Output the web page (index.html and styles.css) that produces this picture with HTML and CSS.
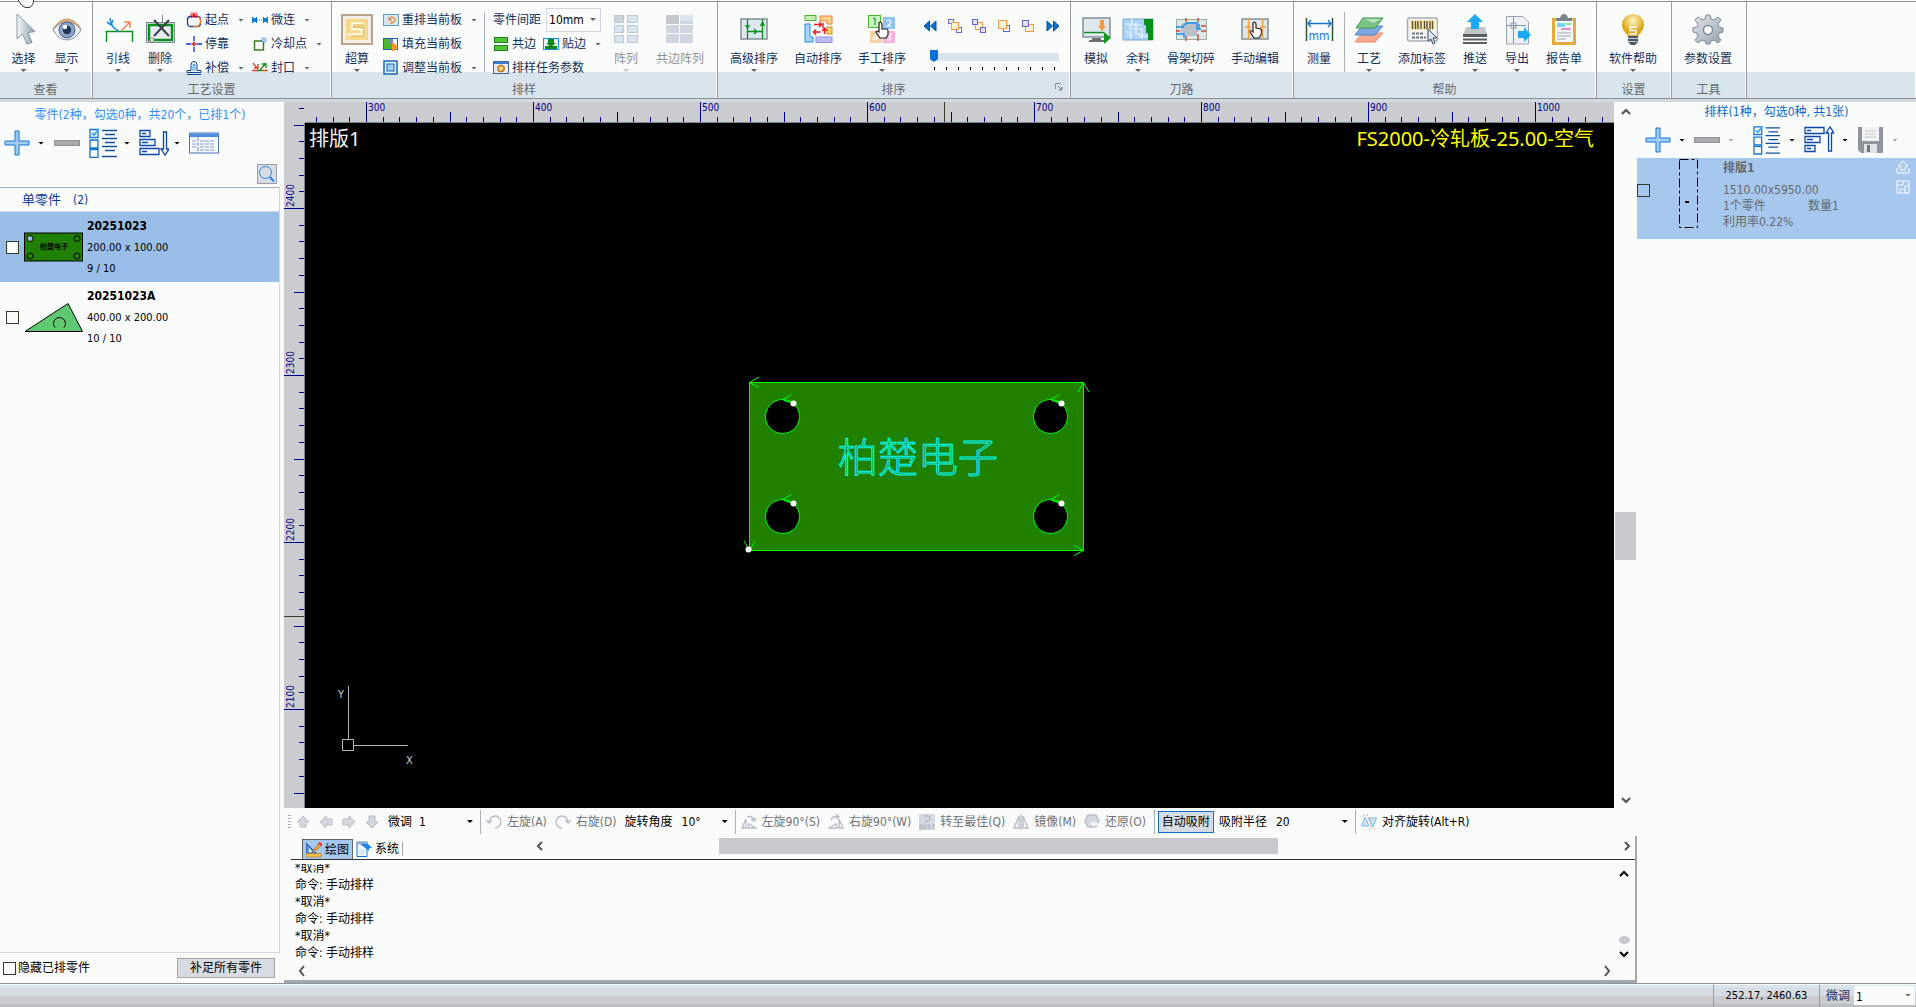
FILE: index.html
```html
<!DOCTYPE html>
<html lang="zh-CN">
<head>
<meta charset="utf-8">
<title>排版1</title>
<link rel="stylesheet" href="styles.css">
</head>
<body>
<div class="app">
<svg class="pointer" width="18" height="9" viewBox="0 0 18 9"><path d="M0.500 -1 Q3 3 5 5.500 Q8 8.500 12 7.500 Q17 6 16.500 -1Z" fill="#fff" stroke="#333"/></svg>
<header class="ribbon">
  <section class="group g-view">
    <div class="tools">
      <button class="tool w43"><svg viewBox="0 0 32 32"><defs><linearGradient id="cur" x1="0" x2="1"><stop offset="0" stop-color="#f4f7fa"/><stop offset="1" stop-color="#8f9db0"/></linearGradient></defs><path d="M9 0V25L14.500 20L19 30L24 28.500L20 18.500L27 17.500Z" fill="url(#cur)" stroke="#8893a3"/></svg><span>选择</span><i class="caret"></i></button>
      <button class="tool w43"><svg viewBox="0 0 32 32"><path d="M2 15Q8 5 16 5T30 15Q24 9 16 9T2 15Z" fill="#e3b27a" stroke="#a86f35" stroke-width=".6"/><path d="M2 16Q8 8 16 8T30 16Q24 26 16 26T2 16Z" fill="#eef2f7" stroke="#8a93a0"/><circle cx="16" cy="16" r="8" fill="#8ba3c4" stroke="#4b6284"/><circle cx="16" cy="16" r="4.200" fill="#1e3557"/><circle cx="14" cy="13" r="2.200" fill="#fff"/></svg><span>显示</span><i class="caret"></i></button>
    </div>
    <h2>查看</h2>
  </section>
  <section class="group g-craft">
    <div class="tools">
      <button class="tool w42"><svg viewBox="0 0 32 32" fill="none"><path d="M4.500 28V17.500H30.500V28" stroke="#0a8f1c" stroke-width="1.400"/><path d="M8 4Q9 14 17 17M5 8L9 11L11 6" stroke="#1c8fe6" stroke-width="1.600"/><path d="M19 17L27 9M22 8L28 8V14" stroke="#f0855a" stroke-width="1.500"/></svg><span>引线</span><i class="caret"></i></button>
      <button class="tool w42"><svg viewBox="0 0 32 32" fill="none"><rect x="2.500" y="8.500" width="28" height="20" fill="#e7edf0" stroke="#7d8896"/><rect x="5" y="11" width="23" height="15" stroke="#0a8f1c" stroke-width="2.500"/><path d="M18.500 1V9" stroke="#7d8896"/><path d="M10 6L25 22M25 6L10 22" stroke="#3c3f44" stroke-width="2"/><circle cx="8" cy="26" r="2" fill="#fff" stroke="#888"/></svg><span>删除</span><i class="caret"></i></button>
      <div class="stack">
        <button class="mini"><svg viewBox="0 0 16 16" fill="none"><rect x="1.500" y="4.500" width="13" height="10" rx="3" stroke="#223a96" stroke-width="1.300"/><path d="M7 14.500H12L14.500 11V7L12 4.500" stroke="#e0883a" stroke-width="1.300"/><path d="M5 .5L11 6M11 .5L5 6M4 3H12M8 0V6" stroke="#e11"/></svg><span>起点</span><i class="caret"></i></button>
        <button class="mini"><svg viewBox="0 0 16 16"><path d="M0 8H5M11 8H16M8 0V5M8 11V16" stroke="#1b2fe0" stroke-width="1.300"/><path d="M5.500 8H10.500M8 5.500V10.500" stroke="#e11" stroke-width="1.300"/></svg><span>停靠</span></button>
        <button class="mini"><svg viewBox="0 0 16 16" fill="none" stroke="#12459a"><path d="M1 14.500H15M1 10.500H5V5Q5 1.500 8 1.500T11 5V10.500H15V12.500H1Z"/><path d="M7 11V5Q8 3 9 5V11" stroke="#1c8fe6"/></svg><span>补偿</span><i class="caret"></i></button>
      </div>
      <div class="stack">
        <button class="mini"><svg viewBox="0 0 16 16"><path d="M0 5L4 8L0 11M5 5L2 8L5 11M16 5L12 8L16 11M11 5L14 8L11 11" fill="#0b75d8" stroke="#0b75d8"/><path d="M5 8H12" stroke="#0b75d8" stroke-dasharray="1 1"/></svg><span>微连</span><i class="caret"></i></button>
        <button class="mini"><svg viewBox="0 0 16 16" fill="none"><rect x="2.500" y="5" width="9" height="9" stroke="#35751b" stroke-width="1.400"/><circle cx="12" cy="4" r="2" fill="#cfe4fa" stroke="#4a9bea"/></svg><span>冷却点</span><i class="caret"></i></button>
        <button class="mini"><svg viewBox="0 0 16 16" fill="none"><path d="M0 10.500H6M10 10.500H16" stroke="#d8432b" stroke-width="1.500"/><path d="M5 10.500H10" stroke="#0a8f1c" stroke-width="1.500"/><path d="M1 3L6 9M2 8H6V4" stroke="#d8432b" stroke-width="1.300"/><path d="M8 10L14 3M10 4H14V8" stroke="#0a8f1c" stroke-width="1.300"/></svg><span>封口</span><i class="caret"></i></button>
      </div>
    </div>
    <h2>工艺设置</h2>
  </section>
  <section class="group g-nest">
    <div class="tools">
      <button class="tool w42"><svg viewBox="0 0 32 32"><rect x="1" y="1" width="30" height="29" fill="#f2eee6" stroke="#b9a48a" stroke-width="2"/><rect x="5" y="5" width="22" height="21" fill="#f6d988"/><path d="M23 9.500H11V15H21V20.500H6" fill="none" stroke="#fff8de" stroke-width="2.500"/><path d="M23 11H12.500V13.500H22.500V22H10" fill="none" stroke="#d8a947" stroke-width=".8"/></svg><span>超算</span><i class="caret"></i></button>
      <div class="stack w98">
        <button class="mini"><svg viewBox="0 0 16 16" fill="none"><rect x=".5" y="2.500" width="15" height="11" fill="#d8e8f2" stroke="#6b9ab8"/><path d="M6 5V8H9M6.500 7Q8 4 11 6T9 11H7" stroke="#f0883a" stroke-width="1.300"/></svg><span>重排当前板</span><i class="caret"></i></button>
        <button class="mini"><svg viewBox="0 0 16 16"><rect x=".5" y="2.500" width="14" height="11" fill="#fff" stroke="#1667b7"/><path d="M1 3H6V13H1Z" fill="#4cb82c"/><path d="M6 3H10V8H6Z" fill="#8a7bea"/><path d="M6 8H10V13H6Z" fill="#4cb82c"/><path d="M9 7H11L15 11L11 15H9Z" fill="#f49422"/></svg><span>填充当前板</span></button>
        <button class="mini"><svg viewBox="0 0 16 16"><rect x="1" y="1" width="13" height="13" fill="#e6f0fa" stroke="#1667b7" stroke-width="1.500"/><rect x="4" y="4" width="7" height="7" fill="#a8cdf2" stroke="#1667b7"/></svg><span>调整当前板</span><i class="caret"></i></button>
      </div>
      <i class="divider"></i>
      <div class="stack w112">
        <div class="line"><label for="gap">零件间距</label><div class="combo boxed"><select id="gap"><option>10mm</option></select></div></div>
        <div class="line">
          <button class="mini"><svg viewBox="0 0 16 16" fill="#56c43a" stroke="#12851c"><rect x="1.500" y="1.500" width="13" height="5"/><rect x="1.500" y="9.500" width="13" height="5"/></svg><span>共边</span></button>
          <button class="mini second"><svg viewBox="0 0 16 16"><rect x=".5" y="2.500" width="15" height="11" fill="#eaf6ff" stroke="#1c8fe6"/><path d="M5 3H11V7H13L8 11L3 7H5ZM2 10H14V13H2Z" fill="#0a8a14"/></svg><span>贴边</span><i class="caret"></i></button>
        </div>
        <button class="mini"><svg viewBox="0 0 16 16"><rect x=".5" y="1.500" width="15" height="12" fill="#e9edf2" stroke="#3c6697"/><path d="M1 3H15" stroke="#3b7dd0" stroke-width="2"/><circle cx="8" cy="8.500" r="3.500" fill="#f0a63a" stroke="#b26c12"/><circle cx="8" cy="8.500" r="1.200" fill="#fff"/></svg><span>排样任务参数</span></button>
      </div>
      <button class="tool w42" disabled><svg viewBox="0 0 32 32" fill="#d8e4ee" stroke="#bfc9d6"><rect x="4.500" y="1.500" width="9" height="7" fill="#cfd3da"/><rect x="17.500" y="1.500" width="10" height="7"/><rect x="4.500" y="11.500" width="9" height="7"/><rect x="17.500" y="11.500" width="10" height="7"/><rect x="4.500" y="21.500" width="9" height="7"/><rect x="17.500" y="21.500" width="10" height="7"/></svg><span>阵列</span><i class="caret"></i></button>
      <button class="tool w66" disabled><svg viewBox="0 0 32 32" fill="#cfd5de"><rect x="2" y="1" width="13" height="9" fill="#c6c8cc"/><rect x="16" y="1" width="13" height="6" fill="#d9e6ee"/><rect x="16" y="7" width="13" height="3"/><rect x="2" y="11" width="13" height="8"/><rect x="16" y="11" width="13" height="8"/><rect x="2" y="20" width="13" height="9"/><rect x="16" y="20" width="13" height="9"/></svg><span>共边阵列</span></button>
    </div>
    <h2>排样</h2>
  </section>
  <section class="group g-order">
    <div class="tools">
      <button class="tool w64"><svg viewBox="0 0 32 32" fill="none"><rect x="3" y="5" width="26" height="20" fill="#dde7f0" stroke="#7d8896" stroke-width="1.400"/><path d="M9.500 5V25M24.500 25V5M9.500 17.500H24.500M7.500 11L9.500 14L11.500 11M22.500 12L24.500 8L26.500 12M16 15L19 17.500L16 20" stroke="#0a8f1c" stroke-width="1.300"/></svg><span>高级排序</span><i class="caret"></i></button>
      <button class="tool w64"><svg viewBox="0 0 32 32"><rect x="3" y="1.500" width="11" height="5" fill="#c5efb5" stroke="#4cb82c"/><path d="M18 2H30V10H25V7H18Z" fill="#ffd28a" stroke="#f08430"/><path d="M3 10H8V23H11V28H3Z" fill="#a9d4f8" stroke="#1c8fe6"/><rect x="25" y="13" width="5" height="7" fill="#f6d15c" stroke="#c8952a"/><rect x="14" y="23" width="16" height="5.500" fill="#bcbcf8" stroke="#9090e0"/><path d="M12 10.500H19M17 8L19.500 10.500L17 13M21 9V14M18.500 18H12M14 15.500L11.500 18L14 21M22.500 20V15M20 17L22.500 14L25 17" fill="none" stroke="#f01818" stroke-width="1.400"/></svg><span>自动排序</span></button>
      <button class="tool w64"><svg viewBox="0 0 32 32"><rect x="2.500" y="1.500" width="12" height="12" fill="#c5f5c0" stroke="#4cb82c"/><rect x="17" y="3" width="12" height="12" fill="#8fc3f5"/><rect x="4" y="17" width="12" height="12" fill="#fad0a0"/><rect x="17" y="17" width="12" height="12" fill="#f9aede"/><path d="M7 5L9 4V11" fill="none" stroke="#0a8f1c"/><path d="M21 7Q23 5 24.500 7T21 12H25M21 20H25L23 23Q26 24 24 26H21M9 20L7 25H12M10.500 22V27" fill="none" stroke="#fff" stroke-width="1.200"/><path d="M13 9Q15 7 16 10V15H21Q22 15 22 17V21L20 24H14L10 18Q10 16 13 18Z" fill="#fff" stroke="#222" stroke-width="1.200"/></svg><span>手工排序</span><i class="caret"></i></button>
      <div class="sequence">
        <div class="seq-row">
          <button aria-label="最前"><svg viewBox="0 0 14 14" fill="#0b6fd6" stroke="#0a4f9e"><path d="M6.500 2V12L1 7ZM13 2V12L7.500 7Z"/></svg></button>
          <button aria-label="后移"><svg viewBox="0 0 14 14" fill="#fff"><rect x=".5" y=".5" width="5" height="4" stroke="#6a64d0"/><rect x="8.500" y="8.500" width="5" height="5" stroke="#6a64d0"/><rect x="3.500" y="3.500" width="7" height="7" fill="#fff3d8" stroke="#f79a3c"/></svg></button>
          <button aria-label="上移"><svg viewBox="0 0 14 14" fill="#fff"><rect x="3.500" y="3.500" width="7" height="7" fill="#fff3d8" stroke="#f79a3c"/><rect x=".5" y=".5" width="5" height="5" fill="#dfe3f8" stroke="#6a64d0"/><rect x="8.500" y="8.500" width="5" height="5" fill="#dfe3f8" stroke="#6a64d0"/></svg></button>
          <button aria-label="置前"><svg viewBox="0 0 14 14" fill="#fff"><rect x="6.500" y="6.500" width="6" height="6" stroke="#6a64d0"/><rect x="1.500" y="1.500" width="8" height="8" fill="#fff3d8" stroke="#f79a3c"/></svg></button>
          <button aria-label="置后"><svg viewBox="0 0 14 14" fill="#fff"><rect x="4.500" y="5.500" width="8" height="7" fill="#fff3d8" stroke="#f79a3c"/><rect x="1.500" y="1.500" width="6" height="6" fill="#dfe3f8" stroke="#6a64d0"/></svg></button>
          <button aria-label="最后"><svg viewBox="0 0 14 14" fill="#0b6fd6" stroke="#0a4f9e"><path d="M1 2V12L6.500 7ZM7.500 2V12L13 7Z"/></svg></button>
        </div>
        <input type="range" min="0" max="10" value="0" aria-label="排序">
        <div class="ticks"><i></i><i></i><i></i><i></i><i></i><i></i><i></i><i></i><i></i><i></i><i></i></div>
      </div>
    </div>
    <h2>排序</h2>
    <svg class="launcher" viewBox="0 0 8 8" fill="none" stroke="#8b9199"><path d="M.5 6V.5H6M3 3L6 6"/><path d="M4 7H7V4Z" fill="#8b9199"/></svg>
  </section>
  <section class="group g-path">
    <div class="tools">
      <button class="tool w42"><svg viewBox="0 0 32 32"><rect x="3" y="4" width="27" height="19" fill="#dde7ec" stroke="#7d8896" stroke-width="1.400"/><path d="M12 24H21V26H24V28H9V26H12Z" fill="#6b7076"/><path d="M4 18.500H24" stroke="#0a8f1c" stroke-width="1.400"/><path d="M20 6H24V12H26L22 17L18 12H20Z" fill="#f79a3c"/><path d="M24 18L31 24L24 30Z" fill="#0e9a1e"/></svg><span>模拟</span></button>
      <button class="tool w42"><svg viewBox="0 0 32 32"><path d="M1 5H31V26H1Z" fill="#a9d4f8" stroke="#7da6c4"/><path d="M22 5H31V26H26V19H24V11H22Z" fill="#0a8f1c"/><path d="M3 10H8V15H14M10 5V11H19M14 8V20H20M3 18H9V25M14 15H20V25M5 21H9M16 22H26" fill="none" stroke="#eef8ff" stroke-width="1.200"/></svg><span>余料</span><i class="caret"></i></button>
      <button class="tool w64"><svg viewBox="0 0 32 32" fill="none"><rect x="1.500" y="5.500" width="30" height="20" fill="#dfe6e8" stroke="#9ab09a"/><path d="M6 10L12 8H24V18H22V22H9V19H6Z" fill="#b9c0ca"/><path d="M1 13H8Q9 10 12 9H22V15H26M1 20H9V24M24 10V15" stroke="#1c8fe6" stroke-width="1.400"/><path d="M11 4V8M23 4V8M11 22V27M23 20V27M26 12H31M26 17H31M1 17H5" stroke="#d8432b" stroke-width="1.400"/></svg><span>骨架切碎</span><i class="caret"></i></button>
      <button class="tool w64"><svg viewBox="0 0 32 32"><rect x="3" y="5" width="26" height="20" fill="#dfe7ec" stroke="#7d8896" stroke-width="1.400"/><path d="M9.500 5V25M23.500 5V25M6 13H12M21 13H27" stroke="#f79a3c" stroke-width="1.300"/><path d="M14 9Q16 7 17 10V14L22 15Q23 17 22 21L20 24H15L11 18Q11 15 14 18Z" fill="#fff" stroke="#222" stroke-width="1.200"/></svg><span>手动编辑</span></button>
    </div>
    <h2>刀路</h2>
  </section>
  <section class="group g-help">
    <div class="tools">
      <button class="tool w42"><svg viewBox="0 0 32 32"><path d="M3.500 4V27M29.500 4V27" stroke="#36503a" stroke-width="1.500"/><path d="M5 9.500H28M8 6L5 9.500L8 13M25 6L28 9.500L25 13" fill="none" stroke="#1474d4" stroke-width="1.300"/><text x="16" y="26" text-anchor="middle" class="mm">mm</text></svg><span>测量</span></button>
      <i class="divider d4"></i>
      <button class="tool w42"><svg viewBox="0 0 32 32"><path d="M9 19H30L22 28H2Z" fill="#f8a890" stroke="#f08a70"/><path d="M9 12H30L22 21H2Z" fill="#7ba8e0" stroke="#4a84cc"/><path d="M10 4H30L22 14H3Z" fill="#7cc486" stroke="#3c9a4a"/><path d="M12 5H28L20 9Z" fill="#b9e3bb"/></svg><span>工艺</span><i class="caret"></i></button>
      <button class="tool w64"><svg viewBox="0 0 32 32"><rect x="1.500" y="4" width="30" height="23" rx="2" fill="#f2f4f5" stroke="#a9b0b8" stroke-width="1.600"/><path d="M4 6H29V16H4Z" fill="#fbe7a8"/><path d="M6.500 7V15M9.500 7V15M12 7V15M15 7V15M18.500 7V15M21 7V15M24 7V15M26.500 7V15" stroke="#5a5038" stroke-width="1.400"/><path d="M6 19.500H18M6 23.500H20" stroke="#6b7280" stroke-width="2" stroke-dasharray="3 1"/><path d="M22 15V27L25 25L27 30L29 29L27 24H31Z" fill="#dfe4ec" stroke="#3f4c63"/></svg><span>添加标签</span><i class="caret"></i></button>
      <button class="tool w42"><svg viewBox="0 0 32 32"><path d="M7 13H26L28 21H4Z" fill="#c3c6c8"/><path d="M4 20H28V23H4ZM4 24.500H28V26.500H4ZM4 28H28V30H4Z" fill="#5a6060"/><path d="M16 0L24 8H20V15H12V8H8Z" fill="#18a8f4"/></svg><span>推送</span><i class="caret"></i></button>
      <button class="tool w42"><svg viewBox="0 0 32 32"><path d="M5.500 2.500H22L27.500 8V30H5.500Z" fill="#eef2f5" stroke="#9aa4b0"/><path d="M12.500 3V29M6 11.500H25M10 9H15V14H10Z" fill="none" stroke="#8b97a6"/><path d="M17 17H23V13L30 21L23 28V24H17Z" fill="#18a8f4"/></svg><span>导出</span><i class="caret"></i></button>
      <button class="tool w52"><svg viewBox="0 0 32 32"><rect x="4" y="4" width="24" height="27" fill="#e5a93c"/><rect x="7" y="6" width="18" height="22" fill="#f7f9fb"/><path d="M8 4H12Q13 0 16 0T20 4H24V7H8Z" fill="#7a8491"/><path d="M9 9H17V13H9Z" fill="#6fd6f0"/><path d="M18 9H23V11H18Z" fill="#8ee08a"/><path d="M13 14H23V16H13Z" fill="#e58ad8"/><path d="M9 19H23M9 22H23M9 25H18" stroke="#98a3b0"/></svg><span>报告单</span><i class="caret"></i></button>
    </div>
    <h2>帮助</h2>
  </section>
  <section class="group g-set">
    <div class="tools">
      <button class="tool w66"><svg viewBox="0 0 32 32"><defs><radialGradient id="bulb" cx=".5" cy=".3"><stop offset="0" stop-color="#fff6c8"/><stop offset="1" stop-color="#dca91c"/></radialGradient></defs><path d="M16 0Q27 1 27 11Q27 16 21 22H11Q5 16 5 11Q5 1 16 0Z" fill="url(#bulb)"/><path d="M20 13H13V16.500H19V20H12" fill="none" stroke="#fff" stroke-width="1.400"/><path d="M11 22H21V28L18 31H14L11 28Z" fill="#4d5a66"/><path d="M11 24.500H21M11 27.500H20" stroke="#c3ccd3"/></svg><span>软件帮助</span><i class="caret"></i></button>
    </div>
    <h2>设置</h2>
  </section>
  <section class="group g-set">
    <div class="tools">
      <button class="tool w66"><svg viewBox="0 0 32 32"><defs><linearGradient id="gear" y2="1"><stop offset="0" stop-color="#e3e7ec"/><stop offset="1" stop-color="#97a1ad"/></linearGradient></defs><path d="M14 1H18L19 5L22 6L26 3L29 6L26 10L27 13L31 14V18L27 19L26 22L29 26L26 29L22 26L19 27L18 30H14L13 27L10 26L6 29L3 26L6 22L5 19L1 18V14L5 13L6 10L3 6L6 3L10 6L13 5Z" fill="url(#gear)" stroke="#7f8b99"/><circle cx="16" cy="16" r="4.500" fill="#fbfdfd" stroke="#7f8b99" stroke-width="1.500"/></svg><span>参数设置</span></button>
    </div>
    <h2>工具</h2>
  </section>
  <section class="group rest"><div class="tools"></div><h2></h2></section>
</header>

<main class="work">
  <aside class="parts">
    <h1>零件(2种，勾选0种，共20个，已排1个)</h1>
    <div class="bar">
      <button aria-label="添加零件"><svg width="26" height="30" viewBox="0 0 26 30"><path d="M11 3H15V13H25V17H15V27H11V17H1V13H11Z" fill="#9fcdf5" stroke="#1474d4"/></svg></button><i class="caret dark a1"></i>
      <button aria-label="删除零件"><svg width="26" height="30" viewBox="0 0 26 30"><rect x=".5" y="12.500" width="25" height="5" fill="#a9abad" stroke="#8f9193"/></svg></button>
      <button class="s9" aria-label="勾选"><svg width="30" height="30" viewBox="0 0 30 30" fill="none"><path d="M1 1.500H9V9.500H1ZM1 12H9V20H1ZM1 21.500H9V29.500H1Z" stroke="#1474d4" stroke-width="1.300"/><path d="M3 5L5 7L10 1" stroke="#4aa8f0" stroke-width="2"/><path d="M13 2.500H28M16 6.500H26M13 10.500H28M16 14.500H26M13 18.500H28M16 22.500H26M13 28.500H28" stroke="#14509a" stroke-width="1.300"/></svg></button><i class="caret dark a2"></i>
      <button class="s9" aria-label="排序"><svg width="30" height="30" viewBox="0 0 30 30" fill="none" stroke="#0d47a8" stroke-width="1.300"><path d="M1 2.500H11V8.500H1ZM1 11.500H16V17.500H1ZM1 20.500H20V26.500H1ZM3 5.500H7M3 14.500H9M3 23.500H8M24.500 4H27.500V21H30L26 27L22 21H24.500Z"/></svg></button><i class="caret dark a2"></i>
      <button class="s9" aria-label="列表"><svg width="30" height="30" viewBox="0 0 30 30"><rect x=".5" y="5" width="29" height="20" fill="#f6f9fd" stroke="#4a74b4"/><path d="M1 5.500H29V9H1Z" fill="#4f8de0"/><path d="M9 9V25M3 13H7M3 16H7M3 19H7M11 13H26M11 16H26M11 19H26M11 22H26" stroke="#7f9cc8" stroke-width="1.200" stroke-dasharray="4 1"/></svg></button>
    </div>
    <div class="find"><button aria-label="搜索"><svg width="18" height="18" viewBox="0 0 18 18" fill="none" stroke="#2f86dc"><circle cx="7.500" cy="7.500" r="6"/><path d="M12 12L16 16.500" stroke-width="2"/></svg></button></div>
    <div class="list">
      <h3>单零件<span>(2)</span></h3>
      <label class="part chosen"><input type="checkbox"><svg width="60" height="30" viewBox="0 0 60 30"><rect x=".5" y="1" width="58" height="28" fill="#208000" stroke="#000"/><g fill="none" stroke="#000"><circle cx="6" cy="6.500" r="3" fill="#99bfe8"/><circle cx="53" cy="6.500" r="3"/><circle cx="6" cy="24" r="3"/><circle cx="53" cy="24" r="3"/></g><text x="30" y="17" text-anchor="middle" class="stamp">柏楚电子</text></svg><span><b>20251023</b><em>200.00 x 100.00</em><em>9 / 10</em></span></label>
      <label class="part"><input type="checkbox"><svg width="60" height="30" viewBox="0 0 60 30"><path d="M1 29.500L44 1.500L58.500 29.500Z" fill="#60c870" stroke="#000"/><path d="M31 25.500A6 6 0 1 1 40 25.500" fill="none" stroke="#000"/></svg><span><b>20251023A</b><em>400.00 x 200.00</em><em>10 / 10</em></span></label>
    </div>
    <div class="foot"><label><input type="checkbox">隐藏已排零件</label><button>补足所有零件</button></div>
  </aside>

  <div class="center">
    <div class="stage">
      <svg class="ruler-y">
        <defs><pattern id="ty" y="106" width="21" height="167" patternUnits="userSpaceOnUse"><path d="M0 .5H20M15 17.500H20M15 33.500H20M15 50.500H20M15 67.500H20M10 84.500H20M15 100.500H20M15 117.500H20M15 134.500H20M15 150.500H20" stroke="#000090"/></pattern></defs>
        <rect width="100%" height="100%" fill="url(#ty)"/>
        <path d="M0 514.500H20" stroke="#384028"/><path d="M20.500 21V2000" stroke="#7c8494"/>
        <g><text transform="translate(10 105) rotate(-90)">2400</text><text transform="translate(10 272) rotate(-90)">2300</text><text transform="translate(10 439) rotate(-90)">2200</text><text transform="translate(10 606) rotate(-90)">2100</text></g>
      </svg>
      <svg class="ruler-x">
        <defs><pattern id="tx" x="61" width="167" height="21" patternUnits="userSpaceOnUse"><path d="M.5 0V20M17.500 15V20M33.500 15V20M50.500 15V20M67.500 15V20M84.500 10V20M100.500 15V20M117.500 15V20M134.500 15V20M150.500 15V20" stroke="#000090"/></pattern></defs>
        <rect width="100%" height="100%" fill="url(#tx)"/>
        <path d="M639.500 0V20" stroke="#384028"/><path d="M0 20.500H4000" stroke="#7c8494"/>
        <g><text x="63" y="9">300</text><text x="230" y="9">400</text><text x="397" y="9">500</text><text x="564" y="9">600</text><text x="731" y="9">700</text><text x="898" y="9">800</text><text x="1065" y="9">900</text><text x="1232" y="9">1000</text></g>
      </svg>
      <div class="canvas">
        <svg class="drawing" fill="none">
          <defs><g id="hole"><circle r="17" fill="#000" stroke="#0f0"/><path d="M9 -22L0 -17L10 -13M1 -16L10 -14" stroke="#0f0"/><circle cx="11" cy="-13" r="3" fill="#fff"/></g></defs>
          <rect x="444.500" y="259.500" width="334" height="168" fill="#208000" stroke="#0f0"/>
          <path d="M454 254L444.500 259.500L454 264.500M773 269L778.500 259.500L784 269M769 422.500L778.500 427.500L769 432.500M439 418L444.500 427.500L450 418" stroke="#0f0"/>
          <circle cx="443.500" cy="426.500" r="3" fill="#fff"/>
          <use href="#hole" x="477.500" y="293.500"/><use href="#hole" x="745.500" y="293.500"/><use href="#hole" x="477.500" y="393.500"/><use href="#hole" x="745.500" y="393.500"/>
          <text x="613" y="349" text-anchor="middle" class="engrave">柏楚电子</text>
          <path d="M43.500 563V617M48 622.500H103M37.500 616.500H48.500V627.500H37.500Z" stroke="#b4b4b4"/>
          <text x="33" y="575" class="axis">Y</text><text x="101" y="641" class="axis">X</text>
        </svg>
        <div class="caption"><span>排版1</span><span class="sheet">FS2000-冷轧板-25.00-空气</span></div>
      </div>
      <div class="vscroll"><svg viewBox="0 0 10 8"><path d="M1 6L5 2L9 6"/></svg><i></i><svg viewBox="0 0 10 8"><path d="M1 2L5 6L9 2"/></svg></div>
    </div>

    <div class="cmdbar">
      <i class="grip"></i>
      <button class="arrow" disabled aria-label="上"><svg viewBox="0 0 14 14"><path d="M7 1L13 7H10V12H4V7H1Z"/></svg></button>
      <button class="arrow" disabled aria-label="左"><svg viewBox="0 0 14 14"><path d="M1 7L7 1V4H13V10H7V13Z"/></svg></button>
      <button class="arrow" disabled aria-label="右"><svg viewBox="0 0 14 14"><path d="M13 7L7 1V4H1V10H7V13Z"/></svg></button>
      <button class="arrow" disabled aria-label="下"><svg viewBox="0 0 14 14"><path d="M7 13L13 7H10V1H4V7H1Z"/></svg></button>
      <label for="nudge">微调</label><div class="combo c60"><select id="nudge"><option>1</option></select></div>
      <i class="divider"></i>
      <button disabled><svg viewBox="0 0 16 16" class="ln"><path d="M3 8A6 6 0 1 1 9 14M0 6L3 9L6 6"/></svg>左旋(A)</button>
      <button disabled><svg viewBox="0 0 16 16" class="ln"><path d="M13 8A6 6 0 1 0 7 14M10 6L13 9L16 6"/></svg>右旋(D)</button>
      <label for="angle">旋转角度</label><div class="combo c53"><select id="angle"><option>10°</option></select></div>
      <i class="divider"></i>
      <button disabled><svg viewBox="0 0 16 16" class="ln"><path d="M1 14L5 5V14ZM7 14L15 14L8 10ZM6 3Q11 1 13 6M10 5L13 7L15 4"/></svg>左旋90°(S)</button>
      <button disabled><svg viewBox="0 0 16 16" class="ln"><path d="M15 14L11 5V14ZM9 14L1 14L8 10ZM10 3Q5 1 3 6M8 0L11 3L8 5"/></svg>右旋90°(W)</button>
      <button disabled><svg viewBox="0 0 16 16" class="ln"><path d="M0 0H16V16H0Z" fill="#d5dae2" stroke="none"/><path d="M5 2H9Q12 3 11 6L6 8M1 11V15H3V11ZM5 11V15M5 11H7M5 13H7M5 15H7M9 15H11V13H9V11H11M13 11H16M14.500 11V15"/></svg>转至最佳(Q)</button>
      <button disabled><svg viewBox="0 0 16 16" class="ln"><path d="M1 14L6 2V14ZM15 14L10 2V14ZM8 0V16"/></svg>镜像(M)</button>
      <button disabled><svg viewBox="0 0 16 16" class="ln"><path d="M4 1H12L15 7L12 13H4L1 7Z" fill="#d5dae2"/><path d="M8 10H14Q15 14 11 14M10 8L8 10L10 12" stroke="#fff"/></svg>还原(O)</button>
      <i class="divider"></i>
      <button class="on">自动吸附</button>
      <label for="snap">吸附半径</label><div class="combo c80"><select id="snap"><option>20</option></select></div>
      <i class="divider"></i>
      <button class="live"><svg viewBox="0 0 16 16"><path d="M0.500 12L4 3L8 12ZM8 4H15.500L12 13Z" fill="#cfe2ee" stroke="#6cbcf0"/><path d="M3 0V2M6 0L11 15M8 15H9M13 15H14" stroke="#f0957a" stroke-dasharray="2 1"/></svg>对齐旋转(Alt+R)</button>
    </div>

    <div class="console">
      <div class="tabs">
        <button class="tab active"><svg viewBox="0 0 16 16"><path d="M0 1V12H11Z" fill="#5f8fe0" stroke="#1c3f8c"/><path d="M3 6V10H6Z" fill="#fff"/><path d="M0 11.500H15V15H0Z" fill="#f4c04a" stroke="#a8741a" stroke-width=".6"/><path d="M6 10L13 1L16 3L8 10Z" fill="#f4a52a" stroke="#804a10" stroke-width=".5"/><path d="M12 2L14 0L16 2L15 4Z" fill="#e03028"/></svg>绘图</button>
        <button class="tab"><svg viewBox="0 0 16 16"><path d="M1 2H11V15.500H1Z" fill="#f4f9ff" stroke="#1474d4"/><path d="M1 3V0M3 2V0M5 2V0M7 2V0M9 2V0M11 2V0" stroke="#8896a8"/><path d="M4 3H12L16 7H13V10L8 6Z" fill="#1a86ea"/><path d="M3 9H9M3 11H9M3 13H9" stroke="#b9d4ee"/></svg>系统</button>
        <i class="tab-end"></i>
        <div class="hscroll"><svg viewBox="0 0 8 10"><path d="M6 1L2 5L6 9"/></svg><i></i><svg viewBox="0 0 8 10"><path d="M2 1L6 5L2 9"/></svg></div>
      </div>
      <div class="log">
        <div class="lines"><p>*取消*</p><p>命令: 手动排样</p><p>*取消*</p><p>命令: 手动排样</p><p>*取消*</p><p>命令: 手动排样</p></div>
        <div class="logscroll"><svg viewBox="0 0 10 8"><path d="M1 6L5 2L9 6"/></svg><i></i><svg viewBox="0 0 10 8"><path d="M1 2L5 6L9 2"/></svg></div>
      </div>
      <div class="logfoot"><svg viewBox="0 0 8 12"><path d="M6 1L2 6L6 11"/></svg><svg viewBox="0 0 8 12"><path d="M2 1L6 6L2 11"/></svg></div>
    </div>
  </div>

  <aside class="sheets">
    <h1>排样(1种，勾选0种, 共1张)</h1>
    <div class="bar">
      <button aria-label="添加排样"><svg width="26" height="30" viewBox="0 0 26 30"><path d="M11 3H15V13H25V17H15V27H11V17H1V13H11Z" fill="#9fcdf5" stroke="#1474d4"/></svg></button><i class="caret dark"></i>
      <button aria-label="删除排样"><svg width="26" height="30" viewBox="0 0 26 30"><rect x=".5" y="12.500" width="25" height="5" fill="#a9abad" stroke="#8f9193"/></svg></button><i class="caret pale"></i>
      <button aria-label="勾选" class="s6"><svg width="28" height="30" viewBox="0 0 29 30" fill="none"><path d="M1 1.500H9V9.500H1ZM1 12H9V20H1ZM1 21.500H9V29.500H1Z" stroke="#1474d4" stroke-width="1.300"/><path d="M3 5L5 7L10 1" stroke="#4aa8f0" stroke-width="2"/><path d="M13 2.500H28M16 6.500H26M13 10.500H28M16 14.500H26M13 18.500H28M16 22.500H26M13 28.500H28" stroke="#14509a" stroke-width="1.300"/></svg></button><i class="caret dark"></i>
      <button aria-label="排序"><svg width="30" height="30" viewBox="0 0 30 30" fill="none" stroke="#0d47a8" stroke-width="1.300"><path d="M1 2.500H20V8.500H1ZM1 11.500H16V17.500H1ZM1 20.500H11V26.500H1ZM3 5.500H7M3 14.500H9M3 23.500H7M24.500 26H27.500V8H30L26 2L22 8H24.500Z"/></svg></button><i class="caret dark"></i>
      <button aria-label="保存"><svg width="27" height="30" viewBox="0 0 27 30"><path d="M1 2H26V28H4L1 25Z" fill="#8f959c"/><path d="M5 2H22V16H5Z" fill="#f2f4f4"/><path d="M8 6H19M8 9H19M8 12H19" stroke="#c4cacc"/><path d="M7 19H20V28H7Z" fill="#dfe5e8"/><path d="M10 20H13V27H10Z" fill="#6d7780"/></svg></button><i class="caret pale"></i>
    </div>
    <label class="sheet-card">
      <input type="checkbox">
      <svg class="preview" width="20" height="70" viewBox="0 0 20 70" fill="none" stroke="#000"><rect x=".5" y=".5" width="18" height="68" stroke-dasharray="9 3 3 3"/><path d="M6 43H10" stroke-width="2"/></svg>
      <span class="info"><b>排版1</b><em>1510.00x5950.00</em><em class="pair"><span>1个零件</span><span>数量1</span></em><em>利用率0.22%</em></span>
      <span class="marks"><svg viewBox="0 0 14 14"><path d="M1 8V13H13V8M4.500 10V6H2L7 1L12 6H9.500V10Z"/></svg><svg viewBox="0 0 14 14"><path d="M1 1H13V13H1ZM1 5H7V1M13 6H9V9H4V13M9 9V13"/></svg></span>
    </label>
  </aside>
</main>

<footer class="status">
  <span class="pos">252.17, 2460.63</span>
  <label for="step">微调</label>
  <div class="combo fill"><select id="step"><option>1</option></select></div>
</footer>
</div>
</body>
</html>
```

FILE: styles.css
```css
* { box-sizing: border-box; }
body {
  margin: 0;
  font: 12px/16px "DejaVu Sans Condensed", "Noto Sans", "Noto Sans CJK SC", sans-serif;
  color: #000;
  background: #fafcfc;
}
h1, h2, h3, p { margin: 0; font-size: 12px; font-weight: 400; }
em, i { font-style: normal; }
svg { display: block; flex: none; }
button, select, input { font: inherit; color: inherit; margin: 0; }
button { padding: 0; border: 0; background: none; white-space: nowrap; }
label { white-space: nowrap; }
input[type="checkbox"] {
  appearance: none;
  flex: none;
  width: 13px;
  height: 13px;
  border: 1px solid #333a2c;
  background: #fafcfc;
}
.app { position: relative; height: 100vh; min-height: 500px; display: flex; flex-direction: column; overflow: hidden; }
.pointer { position: absolute; left: 17px; top: 0; z-index: 2; }

.caret {
  flex: none;
  width: 6px;
  height: 3px;
  background: #606468;
  clip-path: polygon(0 0, 100% 0, 50% 100%);
}
.caret.dark { background: #000; }
.caret.pale { background: #a4a6a8; }
.divider { flex: none; width: 1px; align-self: stretch; background: #a8b0b6; }

/* Ribbon */
.ribbon {
  flex: none;
  display: flex;
  margin-top: 1px;
  border-top: 1px solid #909294;
  border-bottom: 1px solid #8c9094;
  color: #14305c;
}
.group { position: relative; flex: none; border-right: 1px solid #9a9ea2; }
.tools { display: flex; height: 70px; padding-left: 4px; }
.group h2 {
  height: 26px;
  margin-right: 1px;
  line-height: 36px;
  text-align: center;
  color: #66696c;
  background: #d9e5ed;
}
.g-view { width: 93px; }
.g-view .tools { padding-left: 2px; }
.g-craft { width: 239px; }
.g-nest { width: 386px; }
.g-order { width: 353px; }
.g-path { width: 223px; }
.g-help { width: 303px; }
.g-set { width: 75px; }
.g-set .tools { padding-left: 3px; }
.rest { flex: 1; border: 0; }

.tool { display: flex; flex-direction: column; align-items: center; padding-top: 12px; }
.tool svg { width: 32px; height: 32px; margin-bottom: 5px; }
.tool .caret { margin-top: 2px; }
.tool:disabled { color: #8e9296; }
.tool:disabled .caret { background: #c4c8cc; }
.mm { font-size: 12px; fill: #1474d4; }
.w42 { width: 42px; }
.w43 { width: 43px; }
.w52 { width: 52px; }
.w64 { width: 64px; }
.w66 { width: 66px; }
.stack { position: relative; z-index: 1; display: grid; grid-template-rows: repeat(3, 24px); padding-top: 6px; width: 66px; }
.tool + .stack { margin-left: 5px; }
.stack.w98 { width: 98px; }
.stack.w112 { width: 112px; margin-left: 8px; }
.mini { display: flex; align-items: center; gap: 3px; }
.mini svg { width: 16px; height: 16px; }
.mini .caret { margin-left: 6px; }
.mini.second { margin-left: 7px; }
.line { display: flex; align-items: center; }
.tools .divider { margin: 10px 0 0 3px; }
.tools .d4 { margin: 10px 3px 0 4px; }

.combo { position: relative; display: flex; }
.combo select { appearance: none; width: 100%; padding: 0 2px; border: 0; border-radius: 0; background: transparent; color: #000; }
.combo::after {
  content: "";
  position: absolute;
  right: 4px;
  top: 50%;
  width: 6px;
  height: 3px;
  margin-top: -2px;
  background: #000;
  clip-path: polygon(0 0, 100% 0, 50% 100%);
  pointer-events: none;
}
.combo.boxed { width: 55px; height: 24px; margin-left: 5px; border: 1px solid #cfd5e0; }
.combo.boxed::after { background: #606468; }

.sequence { width: 138px; margin-left: 9px; padding-top: 17px; }
.seq-row { display: flex; justify-content: space-between; padding-right: 1px; }
.seq-row svg { width: 14px; height: 14px; }
.sequence input {
  appearance: none;
  display: block;
  width: 129px;
  height: 12px;
  margin: 17px 0 0 7px;
  background: linear-gradient(#d9e5ed, #d9e5ed) 0 3px / 100% 8px no-repeat;
}
.sequence input::-webkit-slider-thumb {
  appearance: none;
  width: 8px;
  height: 12px;
  background: #0b6fd6;
  clip-path: polygon(0 0, 100% 0, 100% 75%, 50% 100%, 0 75%);
}
.ticks { display: flex; justify-content: space-between; width: 121px; margin: 5px 0 0 11px; }
.ticks i { width: 1px; height: 3px; background: #000; }
.launcher { position: absolute; right: 7px; bottom: 7px; width: 8px; height: 8px; }

/* Work area */
.work {
  flex: 1;
  min-height: 0;
  display: grid;
  grid-template-columns: 280px minmax(0, 1fr) 279px;
  border-top: 3px solid #d3d9e1;
  border-bottom: 1px solid #8e949c;
}
.bar { display: flex; align-items: center; height: 30px; }

.parts { display: flex; flex-direction: column; min-height: 0; }
.parts h1 { padding: 5px 0; text-align: center; color: #3090f8; }
.parts .bar { padding-left: 4px; }
.a1 { margin: 0 10px 0 8px; }
.a2 { margin-left: 5px; }
.parts .s9 { margin-left: 9px; }
.find { display: flex; justify-content: flex-end; padding: 6px 3px 3px; }
.find button { display: grid; place-items: center; width: 20px; height: 20px; border: 1px solid #9aa0a6; background: #d8dde5; }
.list { flex: 1; min-height: 0; border: solid #d3d9e3; border-width: 1px 1px 1px 0; border-top-color: #a0b0c0; }
.list h3 { height: 24px; padding-left: 22px; line-height: 23px; border-bottom: 1px solid #d3dfe8; color: #0c3c98; font-size: 13px; }
.list h3 span { margin-left: 12px; font-size: 12px; }
.part { display: flex; align-items: center; height: 70px; padding-left: 6px; }
.part.chosen { background: #99bfe8; }
.part svg { margin: 0 2px 0 5px; }
.part > span { display: flex; flex-direction: column; gap: 5px; padding: 1px 0 0 1px; }
.part b { font-size: 12px; }
.part em { font-size: 11px; }
.part b + em { margin-top: 1px; }
.stamp { font-size: 7px; font-weight: 700; }
.foot { display: flex; align-items: center; justify-content: space-between; height: 30px; padding: 0 5px 0 3px; }
.foot label { display: flex; align-items: center; gap: 2px; }
.foot button { width: 98px; height: 20px; border: 1px solid #a2a4a6; background: #d7dbe3; }

.center { display: flex; flex-direction: column; min-height: 0; margin-left: 4px; }
.stage {
  flex: 1;
  min-height: 0;
  display: grid;
  grid-template: 21px minmax(0, 1fr) / 21px minmax(0, 1fr) 23px;
}
.ruler-y { grid-area: 1 / 1 / 3 / 2; }
.ruler-x { grid-area: 1 / 2; }
.ruler-x, .ruler-y { width: 100%; height: 100%; overflow: hidden; background: #cbcccf; font-size: 10px; fill: #000090; }
.canvas { grid-area: 2 / 2; position: relative; overflow: hidden; background: #000; }
.drawing { width: 100%; height: 100%; }
.engrave { font: 300 40px "Noto Sans CJK SC", sans-serif; fill: #208000; stroke: #0ff; }
.axis { font-size: 11px; fill: #d0d0d0; }
.caption {
  position: absolute;
  inset: 4px 20px auto 4px;
  display: flex;
  justify-content: space-between;
  font: 20px/24px "Noto Sans", "Noto Sans CJK SC", sans-serif;
  color: #f4f4f4;
}
.sheet { color: #ff0; }
.vscroll { grid-area: 1 / 3 / 3 / 4; display: flex; flex-direction: column; align-items: center; padding: 6px 0 4px; }
.vscroll svg, .logscroll svg { width: 10px; height: 8px; fill: none; stroke: #505254; stroke-width: 2; }
.vscroll i { width: 21px; height: 48px; margin: 396px 0 auto; background: #c8c9cc; }

.cmdbar { flex: none; display: flex; align-items: center; height: 28px; padding: 2px 0 2px 4px; overflow: hidden; }
.cmdbar > * { flex: none; }
.grip { width: 3px; height: 15px; margin-right: 5px; background: repeating-linear-gradient(#a8aaac 0 1px, transparent 1px 3px); }
.cmdbar button { display: flex; align-items: center; gap: 5px; height: 22px; margin-right: 8px; }
.cmdbar button svg { width: 16px; height: 16px; }
.cmdbar button:disabled { color: #707274; }
.cmdbar .arrow { margin-right: 9px; }
.cmdbar .arrow svg { width: 14px; height: 14px; fill: #d3d8e0; stroke: #b8bcc2; }
.ln { fill: none; stroke: #b8bec8; stroke-width: 1.4; }
.cmdbar .divider { margin-right: 5px; }
.c60 { width: 68px; padding-left: 6px; }
.c53 { width: 62px; padding-left: 8px; }
.c80 { width: 88px; padding-left: 8px; }
.cmdbar .combo::after { right: 7px; }
.cmdbar .combo select { padding: 0 1px; }
.cmdbar .on { justify-content: center; width: 56px; margin: 0 5px 0 -2px; border: 1px solid #0b6fd6; background: #d7dbe3; }

.console { flex: none; border: solid #a5a8a8; border-width: 0 2px 3px 0; }
.tabs { display: flex; align-items: flex-end; height: 24px; margin-left: 7px; padding-left: 11px; border-bottom: 1px solid #303234; }
.tab { display: flex; align-items: center; gap: 3px; height: 20px; padding: 0 3px; }
.tab svg { width: 16px; height: 16px; }
.tab.active { border: 1px solid #606468; border-bottom: 0; background: #a6c8ee; }
.tab-end { width: 1px; height: 14px; margin-bottom: 3px; background: #a8aaac; }
.hscroll { flex: 1; display: flex; align-items: center; align-self: flex-start; height: 18px; margin: 1px 4px 0 133px; }
.hscroll svg { width: 8px; height: 10px; }
.hscroll svg, .logfoot svg { fill: none; stroke: #505254; stroke-width: 2; }
.hscroll i { width: 51%; height: 16px; margin: 0 auto 0 16%; background: #c8c9cc; }
.log { display: flex; height: 98px; margin-top: 4px; }
.lines { flex: 1; display: flex; flex-direction: column; justify-content: flex-end; padding-left: 11px; overflow: hidden; }
.lines p { flex: none; height: 17px; line-height: 17px; }
.logscroll { display: flex; flex-direction: column; align-items: center; width: 22px; padding: 6px 0 4px; }
.logscroll svg { stroke: #000; }
.logscroll i { width: 11px; height: 8px; margin: auto 0 6px; border-radius: 50%; background: #c8c9cc; }
.logfoot { display: flex; justify-content: space-between; height: 18px; padding: 3px 24px 0 14px; }
.logfoot svg { width: 8px; height: 12px; }

.sheets h1 { padding: 2px 0 5px; text-align: center; color: #0b68cc; }
.sheets .bar { gap: 9px; padding-left: 8px; }
.sheets .s6 { margin-left: 10px; }
.sheets .bar .caret { margin-left: -1px; }
.sheet-card { display: flex; height: 81px; margin-top: 3px; padding-right: 6px; background: #a6c8ee; color: #66686c; }
.sheet-card input { margin-top: 26px; background: transparent; }
.preview { margin: 1px 24px 0 29px; }
.info { flex: 1; display: flex; flex-direction: column; padding-top: 2px; }
.info b { margin-bottom: 6px; }
.pair { display: flex; gap: 42px; }
.marks { display: flex; flex-direction: column; gap: 6px; padding-top: 2px; }
.marks svg { width: 14px; height: 14px; fill: none; stroke: #fff; }

.status {
  flex: none;
  display: flex;
  height: 23px;
  line-height: 22px;
  border-top: 1px solid #fafcfc;
  background: linear-gradient(#d9e5ed 0 3px, #d7dbe3 3px 11px, #cbcccf 11px 19px, #bac0c6 19px);
}
.pos { width: 107px; margin-left: auto; border: solid #989ea6; border-width: 0 1px; text-align: center; font-size: 11px; }
.status label { padding: 0 4px 0 6px; color: #14305c; }
.combo.fill { width: 61px; height: 19px; margin: 1px 1px 0 0; background: #fafcfc; }
.combo.fill::after { background: #606468; }
```
